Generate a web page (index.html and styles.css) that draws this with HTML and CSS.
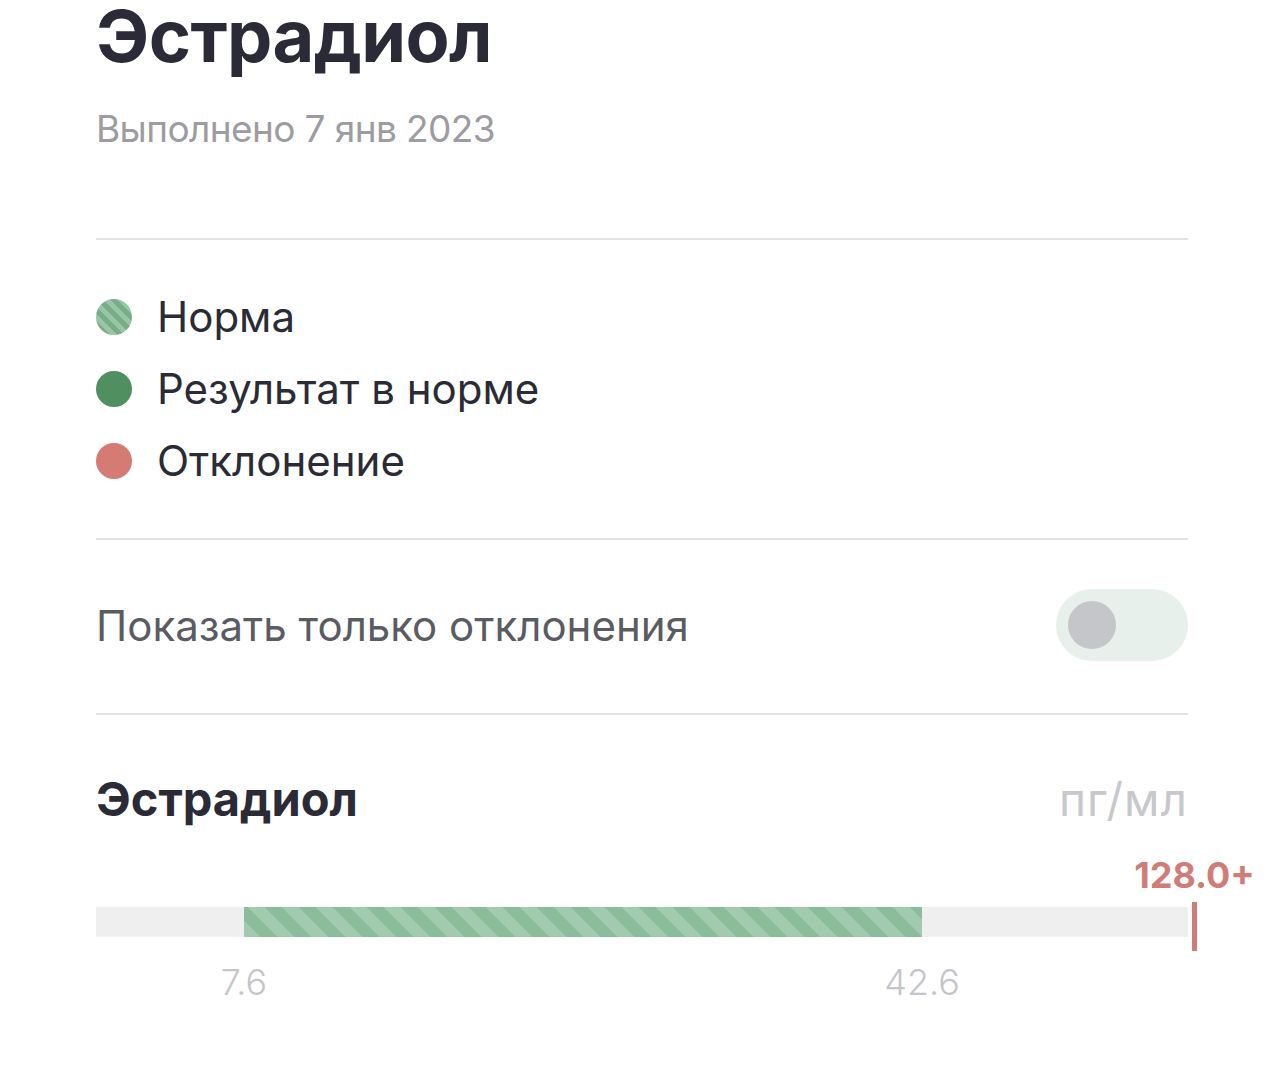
FILE: index.html
```html
<!DOCTYPE html>
<html lang="ru">
<head>
    <meta charset="UTF-8">
    <meta name="viewport" content="width=device-width, initial-scale=1.0">
    <title>Эстрадиол</title>
    <link rel="stylesheet" href="styles.css">
</head>
<body>
    <div class="page">
        <h1 class="title">Эстрадиол</h1>
        <div class="done">Выполнено 7 янв 2023</div>

        <div class="legend">
            <div class="legend-item"><span class="dot striped"></span>Норма</div>
            <div class="legend-item"><span class="dot green"></span>Результат в норме</div>
            <div class="legend-item"><span class="dot red"></span>Отклонение</div>
        </div>

        <div class="filter">
            <span>Показать только отклонения</span>
            <div class="toggle"><div class="knob"></div></div>
        </div>

        <div class="result">
            <div class="result-head">
                <h2>Эстрадиол</h2>
                <span class="unit">пг/мл</span>
            </div>
            <div class="scale">
                <div class="track">
                    <div class="norm" style="left: 13.55%; width: 62.1%;"></div>
                </div>
                <div class="marker" style="left: 100%;">
                    <span class="value">128.0+</span>
                </div>
                <span class="tick" style="left: 13.55%;">7.6</span>
                <span class="tick" style="left: 75.65%;">42.6</span>
            </div>
        </div>
    </div>
</body>
</html>
```

FILE: styles.css
```css
body {
    margin: 0;
    background: #fff;
    font-family: Inter, "Noto Sans", sans-serif;
    color: #2a2b36;
}
.page {
    padding: 0 96px;
}
.title {
    margin: 0;
    font-size: 72px;
    line-height: 72px;
    font-weight: 700;
    letter-spacing: -0.6px;
}
.done {
    margin-top: 33px;
    font-size: 37px;
    line-height: 48px;
    letter-spacing: -0.6px;
    color: #9c9ca1;
}
.legend {
    margin-top: 85px;
    border-top: 2px solid #e2e2e4;
    border-bottom: 2px solid #e2e2e4;
    padding: 40px 0 42px;
}
.legend-item {
    display: flex;
    align-items: center;
    height: 72px;
    font-size: 42px;
}
.dot {
    width: 36px;
    height: 36px;
    border-radius: 50%;
    margin-right: 25px;
    flex-shrink: 0;
    position: relative;
    top: 1px;
}
.dot.striped {
    background: repeating-linear-gradient(45deg, #98c5a6 0 5px, #78ad88 5px 10px);
}
.dot.green { background: #4f8f60; }
.dot.red { background: #d67a74; }
.filter {
    display: flex;
    justify-content: space-between;
    align-items: center;
    padding: 49px 0 52px;
    border-bottom: 2px solid #e2e2e4;
    font-size: 42px;
    color: #5b5c63;
}
.toggle {
    width: 132px;
    height: 72px;
    border-radius: 36px;
    background: #e7f0eb;
    display: flex;
    align-items: center;
    padding-left: 12px;
    box-sizing: border-box;
}
.knob {
    width: 48px;
    height: 48px;
    border-radius: 50%;
    background: #c5c6ca;
}
.result {
    padding-top: 56px;
}
.result-head {
    display: flex;
    justify-content: space-between;
    align-items: baseline;
}
.result-head h2 {
    margin: 0;
    font-size: 47px;
    line-height: 56px;
    font-weight: 700;
}
.unit {
    font-size: 46px;
    letter-spacing: 1px;
    color: #c8c8cc;
}
.scale {
    position: relative;
    margin-top: 80px;
    height: 30px;
    margin-bottom: 120px;
}
.track {
    position: relative;
    height: 30px;
    background: #efefef;
}
.norm {
    position: absolute;
    top: 0;
    bottom: 0;
    background: repeating-linear-gradient(45deg, #a1caae 0 12px, #8cbd9b 12px 24px);
}
.marker {
    position: absolute;
    top: -5px;
    width: 5px;
    height: 49px;
    margin-left: 4px;
    background: #d07c78;
}
.value {
    position: absolute;
    bottom: 54px;
    left: 50%;
    transform: translateX(-50%);
    font-size: 36px;
    font-weight: 700;
    color: #d07c78;
    white-space: nowrap;
}
.tick {
    position: absolute;
    top: 53px;
    transform: translateX(-50%);
    font-size: 36px;
    font-weight: 300;
    color: #c5c5c9;
}
```
